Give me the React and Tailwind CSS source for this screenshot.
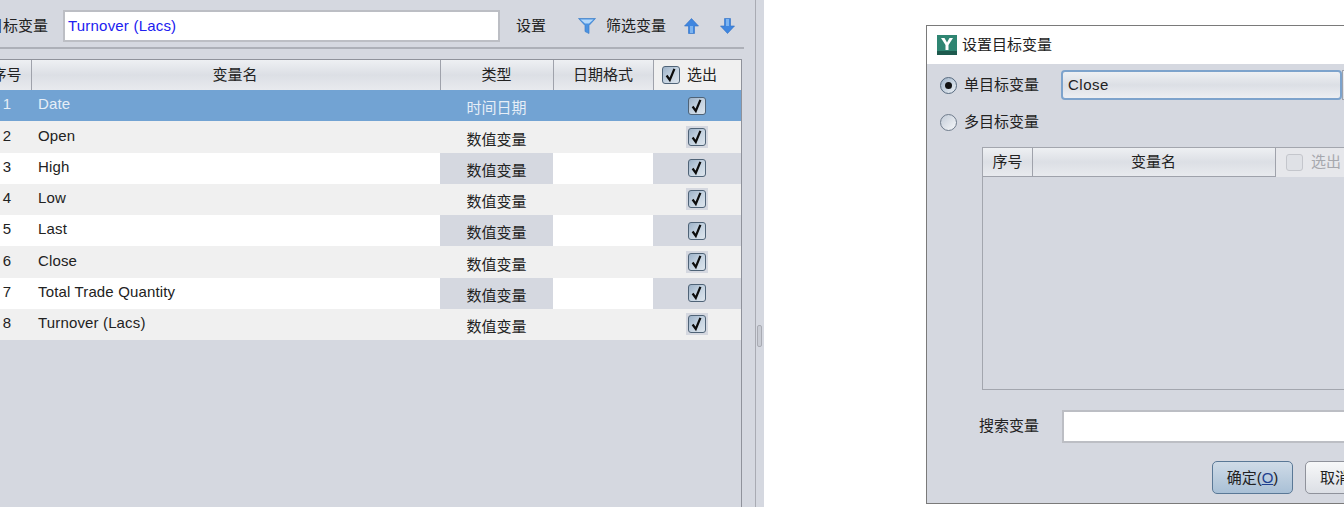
import React from "react";

const rows = [
  ["1", "Date", "时间日期"],
  ["2", "Open", "数值变量"],
  ["3", "High", "数值变量"],
  ["4", "Low", "数值变量"],
  ["5", "Last", "数值变量"],
  ["6", "Close", "数值变量"],
  ["7", "Total Trade Quantity", "数值变量"],
  ["8", "Turnover (Lacs)", "数值变量"],
];

const headCell =
  "flex items-center justify-center border-[#9fa2ab] bg-linear-to-b from-[#eef0f3] via-[#dcdfe5] to-[#e8eaee]";

const CheckBox = ({ disabled }) => (
  <span
    className={
      disabled
        ? "block h-[17px] w-[17px] rounded-[3px] border border-[#c4c6cc] bg-[#dfe1e6]"
        : "block h-[18px] w-[18px] rounded-[3px] border border-[#4f6377] bg-linear-to-br from-[#9db2c8] via-[#c4d2e0] to-[#dde5ed]"
    }
  >
    {!disabled && (
      <svg viewBox="0 0 16 16" className="h-[16px] w-[16px]">
        <path d="M3.6 8.5 L6.8 13 L11.4 1.8" fill="none" stroke="#0c0c0c" strokeWidth="2.2" />
      </svg>
    )}
  </span>
);

const Radio = ({ checked }) => (
  <span
    className={
      checked
        ? "flex h-[17px] w-[17px] items-center justify-center rounded-full border border-[#56697e] bg-linear-to-br from-[#9fb3c8] to-[#eef2f6]"
        : "flex h-[17px] w-[17px] items-center justify-center rounded-full border border-[#6f7c8c] bg-linear-to-br from-[#c3ccd8] to-[#f6f7f9]"
    }
  >
    {checked && <span className="h-[7px] w-[7px] rounded-full bg-[#111]"></span>}
  </span>
);

const Funnel = () => (
  <svg viewBox="0 0 18 16" className="h-[16px] w-[18px]">
    <path d="M0.5 0.5 H17.5 L11 7.5 V15.5 L7 13.5 V7.5 Z" fill="#4a93e2" stroke="#3f7fc9" strokeWidth="0.7" />
    <path d="M2.5 1.5 H15.5 L11 5.5 H7 Z" fill="#b5d9fa" />
  </svg>
);

const Arrow = ({ down }) => (
  <svg viewBox="0 0 15 16" className={down ? "h-[16px] w-[15px] rotate-180" : "h-[16px] w-[15px]"}>
    <path d="M7.5 0.5 L14.5 8 H10.5 V15.5 H4.5 V8 H0.5 Z" fill="#3f86e0" stroke="#2f6fc4" strokeWidth="0.6" />
    <path d="M6 8 H9 V15 H6 Z" fill="#7db4f0" />
  </svg>
);

const App = () => {
  return (
    <div className="flex h-[507px] w-[1344px] overflow-hidden bg-white font-['Liberation_Sans','Noto_Sans_CJK_SC',sans-serif] text-[15px] text-[#222]">
      {/* left pane */}
      <div className="flex w-[755px] flex-none flex-col overflow-hidden bg-[#d5d8e0]">
        <div className="flex h-[49px] w-[744px] flex-none items-center border-b-2 border-[#adb0b8] pt-[5px]">
          <span className="-ml-[12px] w-[60px] flex-none pt-[1px]">目标变量</span>
          <div className="ml-[15px] flex h-[32px] w-[437px] flex-none items-center border-2 border-[#bcbec4] bg-white pl-[3px] tracking-[0.2px] text-[#2020f0]">
            Turnover (Lacs)
          </div>
          <span className="ml-[16px]">设置</span>
          <span className="ml-[32px]"><Funnel /></span>
          <span className="ml-[10px]">筛选变量</span>
          <span className="ml-[18px]"><Arrow /></span>
          <span className="ml-[21px]"><Arrow down /></span>
        </div>

        <div className="mt-[10px] flex-1 w-[742px] border-t border-r border-[#8f929b]">
          <div className="-ml-[18px] grid h-[29px] grid-cols-[50px_408px_113px_100px_88px]">
            <div className={`${headCell} border-r`}>序号</div>
            <div className={`${headCell} pr-[2px]`}>变量名</div>
            <div className={`${headCell} border-l pr-[1px]`}>类型</div>
            <div className={`${headCell} border-l pr-[1px]`}>日期格式</div>
            <div className="flex h-[30px] items-center gap-[7px] border-l border-[#9fa2ab] bg-[#f0f0f0] pl-[8px]">
              <CheckBox />
              <span>选出</span>
            </div>
          </div>
          <div className="h-px w-[653px] bg-[#8f929b]"></div>
          {rows.map((r, i) => {
            const selected = i === 0;
            const even = i % 2 === 1;
            const rowBg = selected ? "bg-[#72a3d3] text-[#e6eef7]" : even ? "bg-[#f0f0f0]" : "bg-white";
            const sideBg = !selected && !even ? "bg-[#d5d8e0]" : "";
            return (
              <div
                key={r[0]}
                className={`-ml-[18px] grid h-[31.25px] grid-cols-[50px_408px_113px_100px_88px] ${rowBg}`}
              >
                <div className="flex items-center justify-center pb-[2px]">{r[0]}</div>
                <div className="flex items-center pb-[2px] pl-[6px] tracking-[0.15px]">{r[1]}</div>
                <div className={`flex items-center justify-center pt-[6px] ${sideBg}`}>{r[2]}</div>
                <div></div>
                <div className={`flex items-center justify-center ${sideBg}`}>
                  <span className={even ? "flex h-[22px] w-[22px] items-center justify-center bg-[#d5d8e0]" : "flex h-[22px] w-[22px] items-center justify-center"}>
                    <CheckBox />
                  </span>
                </div>
              </div>
            );
          })}
        </div>
      </div>

      {/* splitter */}
      <div className="flex w-[9px] flex-none flex-col border-l border-[#a9abb3] bg-[#d5d8e0]">
        <div className="ml-[1px] mt-[325px] h-[22px] w-[5px] rounded-[2px] border border-[#a9abb3] bg-[#c9ccd4]"></div>
      </div>

      {/* dialog */}
      <div className="ml-[162px] mt-[25px] flex h-[479px] w-[470px] flex-none flex-col border border-[#7a7a7a] bg-[#d5d8e0]">
        <div className="flex h-[38px] flex-none items-center gap-[5px] bg-white pl-[10px]">
          <svg viewBox="0 0 20 20" className="h-[20px] w-[20px]">
            <rect width="20" height="20" fill="#2f8572" />
            <rect y="16" width="20" height="4" fill="#1d5a4e" />
            <path d="M4 3 H7.5 L10 7.5 L12.5 3 H16 L11.5 10 V15 H8.5 V10 Z" fill="#fff" />
          </svg>
          <span>设置目标变量</span>
        </div>
        <div className="flex flex-1 flex-col pl-[13px]">
          <div className="mt-[6px] flex h-[30px] items-center">
            <Radio checked />
            <span className="ml-[7px] w-[75px] flex-none whitespace-nowrap">单目标变量</span>
            <div className="ml-[22px] flex h-[30px] w-[281px] flex-none items-center rounded-[4px] border-2 border-[#7da3cc] bg-linear-to-b from-[#eef0f3] via-[#dcdfe5] to-[#eceef2] pl-[5px] tracking-[0.5px]">
              Close
            </div>
            <div className="h-[30px] w-[20px] flex-none border border-[#9fa2ab] bg-linear-to-b from-[#eef0f3] to-[#dcdfe5]"></div>
          </div>
          <div className="mt-[7px] flex h-[30px] items-center">
            <Radio />
            <span className="ml-[7px]">多目标变量</span>
          </div>
          <div className="ml-[42px] mt-[10px] h-[243px] w-[420px] border border-[#a3a6ae]">
            <div className="grid h-[29px] grid-cols-[50px_243px_81px]">
              <div className={`${headCell} border-r border-b`}>序号</div>
              <div className={`${headCell} border-r border-b pr-[1px]`}>变量名</div>
              <div className="flex items-center gap-[8px] bg-[#e6e7eb] pl-[10px] text-[#a6a8ae]">
                <CheckBox disabled />
                <span>选出</span>
              </div>
            </div>
          </div>
          <div className="mt-[20px] flex h-[33px] items-center">
            <span className="ml-[39px] w-[60px]">搜索变量</span>
            <div className="ml-[23px] h-[33px] w-[300px] border-2 border-[#bcbec4] bg-white"></div>
          </div>
          <div className="mt-[18px] flex">
            <div className="ml-[272px] flex h-[33px] w-[81px] items-center justify-center rounded-[5px] border border-[#5a7896] bg-linear-to-b from-[#cfdbe7] to-[#a9c0d6] pt-[1px]">
              确定(<span className="text-[#1f3f8f] underline">O</span>)
            </div>
            <div className="ml-[12px] flex h-[33px] w-[81px] flex-none items-center justify-center rounded-[5px] border border-[#8f929b] bg-linear-to-b from-[#f7f8f9] to-[#dcdfe5] pt-[1px]">
              取消(C)
            </div>
          </div>
        </div>
      </div>
    </div>
  );
};

export default App;
